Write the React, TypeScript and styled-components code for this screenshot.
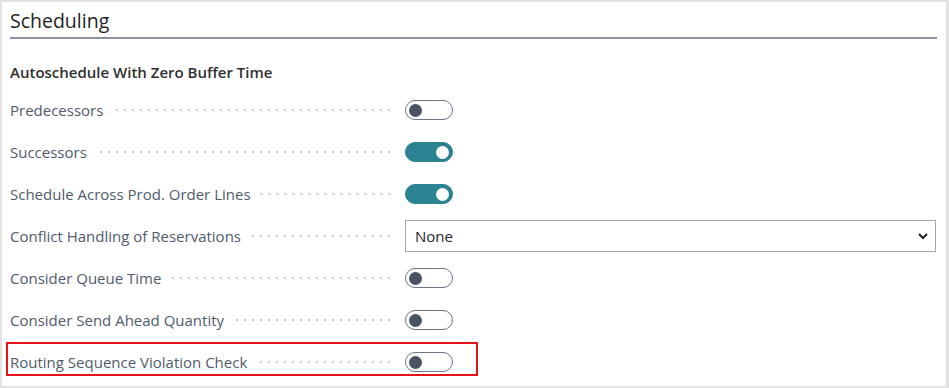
import React from "react";
import styled, { createGlobalStyle } from "styled-components";

const GlobalStyle = createGlobalStyle`
  html, body {
    margin: 0;
    padding: 0;
    background: #e2e2e2;
  }
  body {
    font-family: "Open Sans", "Noto Sans", Arial, sans-serif;
  }
`;

const Panel = styled.div`
  margin: 2px;
  width: 944px;
  height: 384px;
  box-sizing: border-box;
  background: #ffffff;
  padding: 0 10px 0 8px;
  overflow: hidden;
`;

const Header = styled.div`
  height: 35px;
  margin-right: -1px;
  border-bottom: 2px solid #8a91a3;
  display: flex;
  align-items: center;
`;

const Title = styled.h1`
  margin: 0;
  padding-top: 2px;
  font-size: 19.5px;
  font-weight: 400;
  color: #1f1f1f;
`;

const GroupTitle = styled.h2`
  margin: 23px 0 7px 0;
  height: 20px;
  line-height: 20px;
  font-size: 15px;
  font-weight: 600;
  color: #2f2f2f;
`;

const Row = styled.div<{ $highlight?: boolean }>`
  position: relative;
  display: grid;
  grid-template-columns: 385px 1fr;
  column-gap: 10px;
  align-items: center;
  height: 42px;

  &::after {
    content: "";
    display: ${p => (p.$highlight ? "block" : "none")};
    position: absolute;
    left: -4px;
    top: 1px;
    width: 472px;
    height: 34px;
    box-sizing: border-box;
    border: 2px solid #e4141a;
    pointer-events: none;
  }
`;

const LabelCell = styled.div`
  display: flex;
  align-items: center;
  min-width: 0;
`;

const Label = styled.span`
  font-size: 15px;
  color: #505b6c;
  white-space: nowrap;
`;

const Leader = styled.span`
  flex: 1;
  height: 6px;
  margin-left: 8px;
  margin-right: 2px;
  background-image: radial-gradient(circle at 4px 3px, #c8c8c8 0.9px, transparent 1.3px);
  background-size: 8px 6px;
  background-repeat: repeat-x;
  background-position: right center;
`;

const Track = styled.div<{ $on: boolean }>`
  width: 48px;
  height: 20px;
  box-sizing: border-box;
  border-radius: 10px;
  border: 1.5px solid ${p => (p.$on ? "#2b8290" : "#6c7385")};
  background: ${p => (p.$on ? "#2b8290" : "#ffffff")};
  display: flex;
  align-items: center;
  justify-content: ${p => (p.$on ? "flex-end" : "flex-start")};
  padding: 0 3px;
`;

const Knob = styled.div<{ $on: boolean }>`
  width: 13px;
  height: 13px;
  border-radius: 50%;
  background: ${p => (p.$on ? "#ffffff" : "#4a5266")};
`;

const Select = styled.div`
  height: 32px;
  box-sizing: border-box;
  border: 1px solid #a6a6a6;
  display: flex;
  align-items: center;
  justify-content: space-between;
  padding: 0 6px 0 9px;
  font-size: 15px;
  color: #262626;
`;

const Toggle = ({ on }: { on: boolean }) => (
  <Track $on={on}>
    <Knob $on={on} />
  </Track>
);

interface Field {
  label: string;
  kind: "toggle" | "select";
  on?: boolean;
  value?: string;
  highlight?: boolean;
}

const fields: Field[] = [
  { label: "Predecessors", kind: "toggle", on: false },
  { label: "Successors", kind: "toggle", on: true },
  { label: "Schedule Across Prod. Order Lines", kind: "toggle", on: true },
  { label: "Conflict Handling of Reservations", kind: "select", value: "None" },
  { label: "Consider Queue Time", kind: "toggle", on: false },
  { label: "Consider Send Ahead Quantity", kind: "toggle", on: false },
  { label: "Routing Sequence Violation Check", kind: "toggle", on: false, highlight: true }
];

export default function App() {
  return (
    <>
      <GlobalStyle />
      <Panel>
        <Header>
          <Title>Scheduling</Title>
        </Header>
        <GroupTitle>Autoschedule With Zero Buffer Time</GroupTitle>
        {fields.map(f => (
          <Row key={f.label} $highlight={f.highlight}>
            <LabelCell>
              <Label>{f.label}</Label>
              <Leader />
            </LabelCell>
            {f.kind === "toggle" ? (
              <Toggle on={!!f.on} />
            ) : (
              <Select>
                <span>{f.value}</span>
                <svg width="12" height="12" viewBox="0 0 12 12">
                  <path d="M2 4l4 4 4-4" fill="none" stroke="#1f1f1f" strokeWidth="2" />
                </svg>
              </Select>
            )}
          </Row>
        ))}
      </Panel>
    </>
  );
}
